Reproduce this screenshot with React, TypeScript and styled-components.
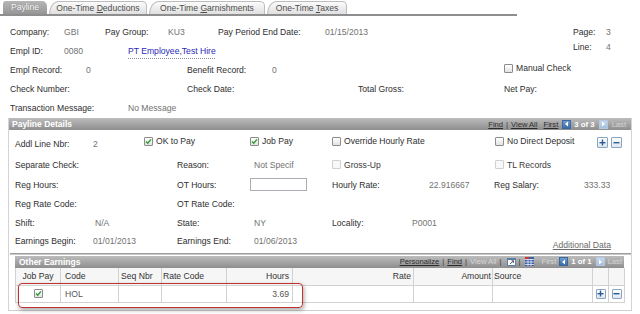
import React from "react";
import styled, { createGlobalStyle, css } from "styled-components";

const Global = createGlobalStyle`
  html, body { margin: 0; padding: 0; background: #fff; }
  body { font-family: "Liberation Sans", Arial, sans-serif; font-size: 8.6px; color: #2e2e2e; }
  * { box-sizing: border-box; }
`;

const Page = styled.div`
  position: relative;
  width: 640px;
  height: 314px;
  overflow: hidden;
  background: #fff;
`;

/* ---------- tabs ---------- */
const TabBar = styled.div`
  display: flex;
  align-items: flex-end;
  gap: 2px;
  width: 517px;
  height: 16px;
  padding-left: 3px;
  border-bottom: 2px solid #8e8e8e;
`;

const Tab = styled.div<{ $w: number; $active?: boolean }>`
  width: ${(p) => p.$w}px;
  height: 13px;
  line-height: 12px;
  text-align: center;
  white-space: nowrap;
  ${(p) =>
    p.$active
      ? css`
          background: linear-gradient(#b6b6b6, #979797);
          color: #fff;
          text-shadow: 0 0 1px #666;
          border-radius: 3px 5px 0 0;
        `
      : css`
          background: linear-gradient(#fbfbfb, #e0e0e0);
          color: #4d4d4d;
          border: 1px solid #bcbcbc;
          border-bottom: none;
          border-radius: 10px 5px 0 0 / 13px 5px 0 0;
        `}
`;

/* ---------- generic fields ---------- */
const Row = styled.div<{ $h: number }>`
  display: flex;
  align-items: center;
  height: ${(p) => p.$h}px;
  white-space: nowrap;
`;

const Label = styled.span<{ $w?: number }>`
  flex: none;
  ${(p) => (p.$w ? `width: ${p.$w}px;` : "")}
  color: #2e2e2e;
`;

const Value = styled.span<{ $w?: number }>`
  flex: none;
  ${(p) => (p.$w ? `width: ${p.$w}px;` : "")}
  color: #727272;
`;

const NameLink = styled.span`
  color: #2a2ab8;
  text-decoration: underline dotted #8a8a9a;
  text-underline-offset: 4px;
`;

const DataLink = styled.span`
  color: #6a6a6a;
  text-decoration: underline;
  align-self: flex-end;
  margin-left: auto;
  margin-right: 20px;
  padding-bottom: 1px;
`;

const CheckItem = styled.span<{ $w?: number; $raised?: boolean; $disabled?: boolean }>`
  flex: none;
  display: flex;
  align-items: center;
  gap: 3px;
  height: 10px;
  ${(p) => (p.$w ? `width: ${p.$w}px;` : "")}
  ${(p) => (p.$raised ? "align-self: flex-start; margin-top: 3px;" : "")}
  color: ${(p) => (p.$disabled ? "#3a3a3a" : "#2e2e2e")};
`;

const Box = styled.span<{ $disabled?: boolean }>`
  flex: none;
  display: inline-flex;
  align-items: center;
  justify-content: center;
  width: 9px;
  height: 9px;
  border: 1px solid ${(p) => (p.$disabled ? "#d0d0d0" : "#8c8c8c")};
  border-radius: 1px;
  background: ${(p) => (p.$disabled ? "#f8f8f8" : "linear-gradient(#ffffff, #e2e2e2)")};
`;

const Check = ({ checked, disabled }: { checked?: boolean; disabled?: boolean }) => (
  <Box $disabled={disabled}>
    {checked && (
      <svg width="7" height="7" viewBox="0 0 7 7">
        <path d="M1 3.6 L2.7 5.2 L6 1.4" stroke="#2f9a2f" strokeWidth="1.4" fill="none" />
      </svg>
    )}
  </Box>
);

const TextInput = styled.span`
  flex: none;
  display: block;
  width: 57px;
  height: 13px;
  border: 1px solid #a9aeb4;
  background: #fff;
  margin-right: 25px;
`;

const SqButton = styled.span<{ $size: number }>`
  flex: none;
  display: inline-flex;
  align-items: center;
  justify-content: center;
  width: ${(p) => p.$size}px;
  height: ${(p) => p.$size}px;
  border: 1px solid #8aa5c2;
  border-radius: 1px;
  background: linear-gradient(#ffffff, #dfe6ee);
`;

const PlusMinus = ({ plus, size }: { plus?: boolean; size: number }) => (
  <SqButton $size={size}>
    <svg width="7" height="7" viewBox="0 0 7 7">
      <rect x="0.5" y="3" width="6" height="1.4" fill="#2a5d92" />
      {plus && <rect x="2.8" y="0.5" width="1.4" height="6" fill="#2a5d92" />}
    </svg>
  </SqButton>
);

const BtnPair = styled.div`
  display: flex;
  gap: 3px;
  align-self: flex-start;
  margin-top: 4px;
`;

/* ---------- header block ---------- */
const Header = styled.div`
  display: flex;
  padding: 6px 0 0 10px;
`;

const HeaderMain = styled.div`
  width: 563px;
`;

const HeaderSide = styled.div`
  display: flex;
  flex-direction: column;
`;

/* ---------- group boxes ---------- */
const Details = styled.section`
  margin: 1px 0 0 8px;
  width: 624px;
  border-left: 1px solid #d3d3d3;
  border-right: 1px solid #d3d3d3;
  border-bottom: 1px solid #cfcfcf;
`;

const Bar = styled.div<{ $pl: number; $pr: number }>`
  display: flex;
  align-items: center;
  justify-content: space-between;
  height: 12px;
  padding: 0 ${(p) => p.$pr}px 0 ${(p) => p.$pl}px;
  background: linear-gradient(#bcbcbc, #8e8e8e);
  white-space: nowrap;
`;

const BarTitle = styled.span`
  color: #fff;
  font-weight: bold;
  font-size: 8.5px;
`;

const Nav = styled.div`
  display: flex;
  align-items: center;
  font-size: 7.6px;
`;

const NavLink = styled.span<{ $off?: boolean; $ml?: number }>`
  color: ${(p) => (p.$off ? "#d6d6d6" : "#2c2c2c")};
  text-decoration: ${(p) => (p.$off ? "none" : "underline")};
  margin-left: ${(p) => p.$ml ?? 0}px;
`;

const Sep = styled.span<{ $ml?: number }>`
  color: #3a3a3a;
  margin-left: ${(p) => p.$ml ?? 3}px;
`;

const Count = styled.span`
  color: #fff;
  font-weight: bold;
  font-size: 7.8px;
  margin-left: 3px;
`;

const ArrowBox = styled.span<{ $off?: boolean; $ml?: number }>`
  display: inline-flex;
  align-items: center;
  justify-content: center;
  width: 9px;
  height: 9px;
  margin-left: ${(p) => p.$ml ?? 4}px;
  background: ${(p) => (p.$off ? "linear-gradient(#c5d8ec, #a4c0de)" : "linear-gradient(#6f9cd0, #3b6ca8)")};
  border: 1px solid ${(p) => (p.$off ? "#b4c9df" : "#3c679c")};
`;

const Arrow = ({ right, off, ml }: { right?: boolean; off?: boolean; ml?: number }) => (
  <ArrowBox $off={off} $ml={ml}>
    <svg width="5" height="6" viewBox="0 0 5 6">
      <path d={right ? "M1 0.5 L4 3 L1 5.5 Z" : "M4 0.5 L1 3 L4 5.5 Z"} fill="#fff" />
    </svg>
  </ArrowBox>
);

const IconSlot = styled.span<{ $ml?: number }>`
  display: inline-flex;
  margin-left: ${(p) => p.$ml ?? 3}px;
`;

const DetailBody = styled.div`
  padding: 3px 0 2px 6px;
`;

const Divider = styled.div`
  margin-left: 1px;
  height: 2px;
  border-top: 1px solid #9c9c9c;
  border-bottom: 1px solid #c9c9c9;
`;

const GridWrap = styled.div`
  padding: 1px 7px 7px 6px;
`;

const GridRow = styled.div<{ $h: number; $head?: boolean }>`
  display: grid;
  grid-template-columns: 45px 58px 43px 65px 66px 121px 79px 100px 16px 16px;
  height: ${(p) => p.$h}px;
  background: ${(p) => (p.$head ? "#f6f6f6" : "#fff")};
  border-left: 1px solid #d2d2d2;
`;

const GCell = styled.div<{ $align?: "left" | "right" | "center"; $pad?: number }>`
  display: flex;
  align-items: center;
  justify-content: ${(p) =>
    p.$align === "right" ? "flex-end" : p.$align === "center" ? "center" : "flex-start"};
  padding: 0 ${(p) => (p.$align === "right" ? p.$pad ?? 3 : 0)}px 0
    ${(p) => (p.$align === "right" ? 0 : p.$pad ?? 0)}px;
  border-right: 1px solid #d2d2d2;
  border-bottom: 1px solid #d2d2d2;
  white-space: nowrap;
  color: #333;
`;

const DataText = styled.span`
  color: #555;
`;

const Highlight = styled.div`
  position: absolute;
  left: 18px;
  top: 283px;
  width: 285px;
  height: 25px;
  border: 1.5px solid #c0312f;
  border-radius: 4px;
  box-shadow: 1px 2px 4px rgba(0, 0, 0, 0.35);
  pointer-events: none;
`;

const ZoomIcon = () => (
  <svg width="9" height="9" viewBox="0 0 9 9">
    <rect x="0.5" y="1.5" width="8" height="7" fill="#fff" stroke="#5a7ea6" />
    <rect x="0.5" y="1.5" width="8" height="1.5" fill="#5a7ea6" />
    <path d="M3 7 L6.5 3.8 M4.5 3.8 H6.5 V5.8" stroke="#333" strokeWidth="0.8" fill="none" />
  </svg>
);

const GridIcon = () => (
  <svg width="9" height="9" viewBox="0 0 9 9">
    <rect x="0" y="0" width="9" height="9" fill="#3b5fa8" />
    <rect x="0" y="0" width="4" height="2" fill="#d93030" />
    {[2.5, 5, 7.5].map((y) => (
      <line key={"h" + y} x1="0" x2="9" y1={y} y2={y} stroke="#fff" strokeWidth="0.7" />
    ))}
    {[3, 6].map((x) => (
      <line key={"v" + x} x1={x} x2={x} y1="2" y2="9" stroke="#fff" strokeWidth="0.7" />
    ))}
  </svg>
);

export default function App() {
  return (
    <Page>
      <Global />
      <TabBar>
        <Tab $w={44} $active>Payline</Tab>
        <Tab $w={98}>One-Time <u>D</u>eductions</Tab>
        <Tab $w={116}>One-Time <u>G</u>arnishments</Tab>
        <Tab $w={80}>One-Time <u>T</u>axes</Tab>
      </TabBar>

      <Header>
        <HeaderMain>
          <Row $h={19}>
            <Label $w={54}>Company:</Label>
            <Value $w={41}>GBI</Value>
            <Label $w={63}>Pay Group:</Label>
            <Value $w={50}>KU3</Value>
            <Label $w={107}>Pay Period End Date:</Label>
            <Value>01/15/2013</Value>
          </Row>
          <Row $h={19}>
            <Label $w={54}>Empl ID:</Label>
            <Value $w={64}>0080</Value>
            <NameLink>PT Employee,Test Hire</NameLink>
          </Row>
          <Row $h={20}>
            <Label $w={76}>Empl Record:</Label>
            <Value $w={101}>0</Value>
            <Label $w={85}>Benefit Record:</Label>
            <Value $w={232}>0</Value>
            <CheckItem $raised>
              <Check />
              Manual Check
            </CheckItem>
          </Row>
          <Row $h={18.5}>
            <Label $w={177}>Check Number:</Label>
            <Label $w={171}>Check Date:</Label>
            <Label $w={146}>Total Gross:</Label>
            <Label>Net Pay:</Label>
          </Row>
          <Row $h={18.5}>
            <Label $w={118}>Transaction Message:</Label>
            <Value>No Message</Value>
          </Row>
        </HeaderMain>
        <HeaderSide>
          <Row $h={19}>
            <Label $w={33}>Page:</Label>
            <Value>3</Value>
          </Row>
          <Row $h={11}>
            <Label $w={33}>Line:</Label>
            <Value>4</Value>
          </Row>
        </HeaderSide>
      </Header>

      <Details>
        <Bar $pl={3} $pr={5}>
          <BarTitle>Payline Details</BarTitle>
          <Nav>
            <NavLink>Find</NavLink>
            <Sep>|</Sep>
            <NavLink $ml={3}>View All</NavLink>
            <NavLink $ml={6}>First</NavLink>
            <Arrow />
            <Count>3 of 3</Count>
            <Arrow right off />
            <NavLink $off $ml={4}>Last</NavLink>
          </Nav>
        </Bar>

        <DetailBody>
          <Row $h={21}>
            <Label $w={78}>Addl Line Nbr:</Label>
            <Value $w={51}>2</Value>
            <CheckItem $w={106} $raised>
              <Check checked />
              OK to Pay
            </CheckItem>
            <CheckItem $w={82} $raised>
              <Check checked />
              Job Pay
            </CheckItem>
            <CheckItem $w={163} $raised>
              <Check />
              Override Hourly Rate
            </CheckItem>
            <CheckItem $w={102} $raised>
              <Check />
              No Direct Deposit
            </CheckItem>
            <BtnPair>
              <PlusMinus plus size={11} />
              <PlusMinus size={11} />
            </BtnPair>
          </Row>
          <Row $h={21}>
            <Label $w={162}>Separate Check:</Label>
            <Label $w={77}>Reason:</Label>
            <Value $w={78}>Not Specif</Value>
            <CheckItem $w={163} $disabled>
              <Check disabled />
              Gross-Up
            </CheckItem>
            <CheckItem $disabled>
              <Check disabled />
              TL Records
            </CheckItem>
          </Row>
          <Row $h={19.5}>
            <Label $w={162}>Reg Hours:</Label>
            <Label $w={73}>OT Hours:</Label>
            <TextInput />
            <Label $w={97}>Hourly Rate:</Label>
            <Value $w={65}>22.916667</Value>
            <Label $w={90}>Reg Salary:</Label>
            <Value>333.33</Value>
          </Row>
          <Row $h={19}>
            <Label $w={162}>Reg Rate Code:</Label>
            <Label>OT Rate Code:</Label>
          </Row>
          <Row $h={18.5}>
            <Label $w={80}>Shift:</Label>
            <Value $w={82}>N/A</Value>
            <Label $w={77}>State:</Label>
            <Value $w={78}>NY</Value>
            <Label $w={80}>Locality:</Label>
            <Value>P0001</Value>
          </Row>
          <Row $h={18.5}>
            <Label $w={78}>Earnings Begin:</Label>
            <Value $w={84}>01/01/2013</Value>
            <Label $w={77}>Earnings End:</Label>
            <Value $w={200}>01/06/2013</Value>
            <DataLink>Additional Data</DataLink>
          </Row>
        </DetailBody>

        <Divider />

        <GridWrap>
          <Bar $pl={4} $pr={2}>
            <BarTitle>Other Earnings</BarTitle>
            <Nav>
              <NavLink>Personalize</NavLink>
              <Sep>|</Sep>
              <NavLink $ml={3}>Find</NavLink>
              <Sep>|</Sep>
              <NavLink $off $ml={3}>View All</NavLink>
              <Sep>|</Sep>
              <IconSlot $ml={5}>
                <ZoomIcon />
              </IconSlot>
              <Sep>|</Sep>
              <IconSlot $ml={4}>
                <GridIcon />
              </IconSlot>
              <NavLink $off $ml={8}>First</NavLink>
              <Arrow ml={3} />
              <Count>1 of 1</Count>
              <Arrow right off />
              <NavLink $off $ml={3}>Last</NavLink>
            </Nav>
          </Bar>
          <GridRow $h={18} $head>
            <GCell $align="center">Job Pay</GCell>
            <GCell $pad={4}>Code</GCell>
            <GCell $pad={2}>Seq Nbr</GCell>
            <GCell $pad={1}>Rate Code</GCell>
            <GCell $align="right" $pad={3}>Hours</GCell>
            <GCell $align="right" $pad={2}>Rate</GCell>
            <GCell $align="right" $pad={1}>Amount</GCell>
            <GCell $pad={1}>Source</GCell>
            <GCell />
            <GCell />
          </GridRow>
          <GridRow $h={17}>
            <GCell $align="center">
              <Check checked />
            </GCell>
            <GCell $pad={4}>
              <DataText>HOL</DataText>
            </GCell>
            <GCell />
            <GCell />
            <GCell $align="right" $pad={3}>
              <DataText>3.69</DataText>
            </GCell>
            <GCell />
            <GCell />
            <GCell />
            <GCell $align="center">
              <PlusMinus plus size={10} />
            </GCell>
            <GCell $align="center">
              <PlusMinus size={10} />
            </GCell>
          </GridRow>
        </GridWrap>
      </Details>

      <Highlight />
    </Page>
  );
}
